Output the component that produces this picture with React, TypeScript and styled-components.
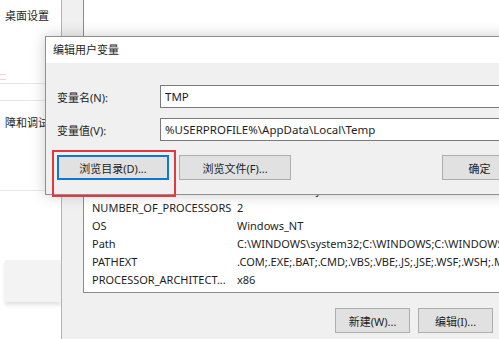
import styled, { createGlobalStyle } from "styled-components";

const Global = createGlobalStyle`
  html, body { margin: 0; padding: 0; }
  body {
    font-family: "Noto Sans", "Noto Sans CJK SC", sans-serif;
    color: #1e1e1e;
  }
`

const Desktop = styled.div`
  position: relative;
  width: 499px;
  height: 339px;
  overflow: hidden;
  background: #fff;
  font-size: 11px;
`

// settings window peeking out on the left
const SettingsWindow = styled.div`
  position: absolute;
  left: 0;
  top: 0;
  width: 61px;
  height: 339px;
  background: #fff;
  display: flex;
  flex-direction: column;
  > .title {
    padding: 8px 0 0 5px;
    height: 24px;
    line-height: 16px;
  }
  > .item {
    padding-left: 5px;
    margin-top: 14px;
    line-height: 16px;
    white-space: nowrap;
  }
  > .block {
    margin: 69px 0 0 5px;
    height: 42px;
    background: #f3f3f3;
    box-shadow: 0 3px 4px rgba(0,0,0,0.12);
  }
`

const Sep = styled.div<{ $top: number; $pink?: boolean }>`
  height: 1px;
  flex: none;
  margin-top: ${p => p.$top}px;
  width: ${p => (p.$pink ? "6px" : "100%")};
  background: ${p => (p.$pink ? "#f3d0d3" : "#e8e8e8")};
`

const EnvWindow = styled.div`
  position: absolute;
  left: 61px;
  top: 0;
  width: 438px;
  height: 339px;
  background: #f0f0f0;
  border-left: 1px solid #b4b4b4;
  display: flex;
  flex-direction: column;
  padding-left: 21px;
  box-sizing: border-box;
`

const ListBox = styled.div<{ $h: number; $pad?: number }>`
  width: 440px;
  height: ${p => p.$h}px;
  flex: none;
  background: #fff;
  border: 1px solid #8c8c8c;
  border-right: none;
  box-sizing: border-box;
  overflow: hidden;
  padding: ${p => p.$pad ?? 1}px 0 0 8px;
`

const Row = styled.div`
  display: flex;
  height: 18px;
  line-height: 18px;
  white-space: nowrap;
  > span:first-child {
    width: 145px;
    flex: none;
    overflow: hidden;
  }
`

const ButtonRow = styled.div<{ $top: number }>`
  display: flex;
  justify-content: flex-end;
  gap: 8px;
  margin-top: ${p => p.$top}px;
  padding-right: 6px;
`

const WinButton = styled.button<{ $w?: number; $focus?: boolean }>`
  width: ${p => p.$w ?? 75}px;
  height: 25px;
  flex: none;
  padding: 0;
  background: #e1e1e1;
  border: ${p => (p.$focus ? "2px solid #0a78d4" : "1px solid #adadad")};
  font: inherit;
  font-size: 11px;
  color: #1e1e1e;
`

const Dialog = styled.div`
  position: absolute;
  left: 45px;
  top: 36px;
  width: 570px;
  height: 159px;
  border: 1px solid #8f8f8f;
  box-sizing: border-box;
  background: #f0f0f0;
  box-shadow: 0 0 14px rgba(0,0,0,0.2);
  display: flex;
  flex-direction: column;
`

const TitleBar = styled.div`
  height: 26px;
  flex: none;
  background: #fff;
  padding-left: 7px;
  line-height: 26px;
  font-size: 11px;
`

const Body = styled.div`
  padding: 22px 12px 0 11px;
  display: flex;
  flex-direction: column;
  gap: 10px;
`

const Field = styled.label`
  display: flex;
  align-items: center;
  > span {
    width: 103px;
    flex: none;
  }
  > input {
    width: 420px;
    height: 23px;
    box-sizing: border-box;
    border: 1px solid #7a7a7a;
    background: #fff;
    font: inherit;
    font-size: 11.5px;
    padding: 0 4px;
    color: #1e1e1e;
  }
`

const DialogButtons = styled.div`
  display: flex;
  gap: 10px;
  margin-top: 4px;
  > .push { margin-left: auto; }
`

const Highlight = styled.div`
  position: absolute;
  left: 52px;
  top: 150px;
  width: 124px;
  height: 47px;
  border: 2.5px solid #e2393e;
  box-sizing: border-box;
`

const rows: [string, string][] = [
  ["ComSpec", "C:\\WINDOWS\\system32\\cmd.exe"],
  ["NUMBER_OF_PROCESSORS", "2"],
  ["OS", "Windows_NT"],
  ["Path", "C:\\WINDOWS\\system32;C:\\WINDOWS;C:\\WINDOWS\\System32\\Wbem"],
  ["PATHEXT", ".COM;.EXE;.BAT;.CMD;.VBS;.VBE;.JS;.JSE;.WSF;.WSH;.MSC"],
  ["PROCESSOR_ARCHITECT...", "x86"],
]

function App() {
  return (
    <Desktop>
      <Global />
      <SettingsWindow>
        <div className="title">桌面设置</div>
        <Sep $top={42} $pink />
        <Sep $top={4} $pink />
        <Sep $top={3} />
        <Sep $top={16} />
        <div className="item">障和调试</div>
        <Sep $top={59} />
        <div className="block" />
      </SettingsWindow>

      <EnvWindow>
        <ListBox $h={150} style={{ borderTop: "none" }} />
        <ListBox $h={143} $pad={30}>
          {rows.map(([k, v]) => (
            <Row key={k}>
              <span>{k}</span>
              <span>{v}</span>
            </Row>
          ))}
        </ListBox>
        <ButtonRow $top={15}>
          <WinButton>新建(W)...</WinButton>
          <WinButton>编辑(I)...</WinButton>
        </ButtonRow>
      </EnvWindow>

      <Dialog>
        <TitleBar>编辑用户变量</TitleBar>
        <Body>
          <Field>
            <span>变量名(N):</span>
            <input defaultValue="TMP" />
          </Field>
          <Field>
            <span>变量值(V):</span>
            <input defaultValue="%USERPROFILE%\AppData\Local\Temp" />
          </Field>
          <DialogButtons>
            <WinButton $w={112} $focus>浏览目录(D)...</WinButton>
            <WinButton $w={112}>浏览文件(F)...</WinButton>
            <WinButton className="push">确定</WinButton>
            <WinButton>取消</WinButton>
          </DialogButtons>
        </Body>
      </Dialog>

      <Highlight />
    </Desktop>
  )
}

export default App;
